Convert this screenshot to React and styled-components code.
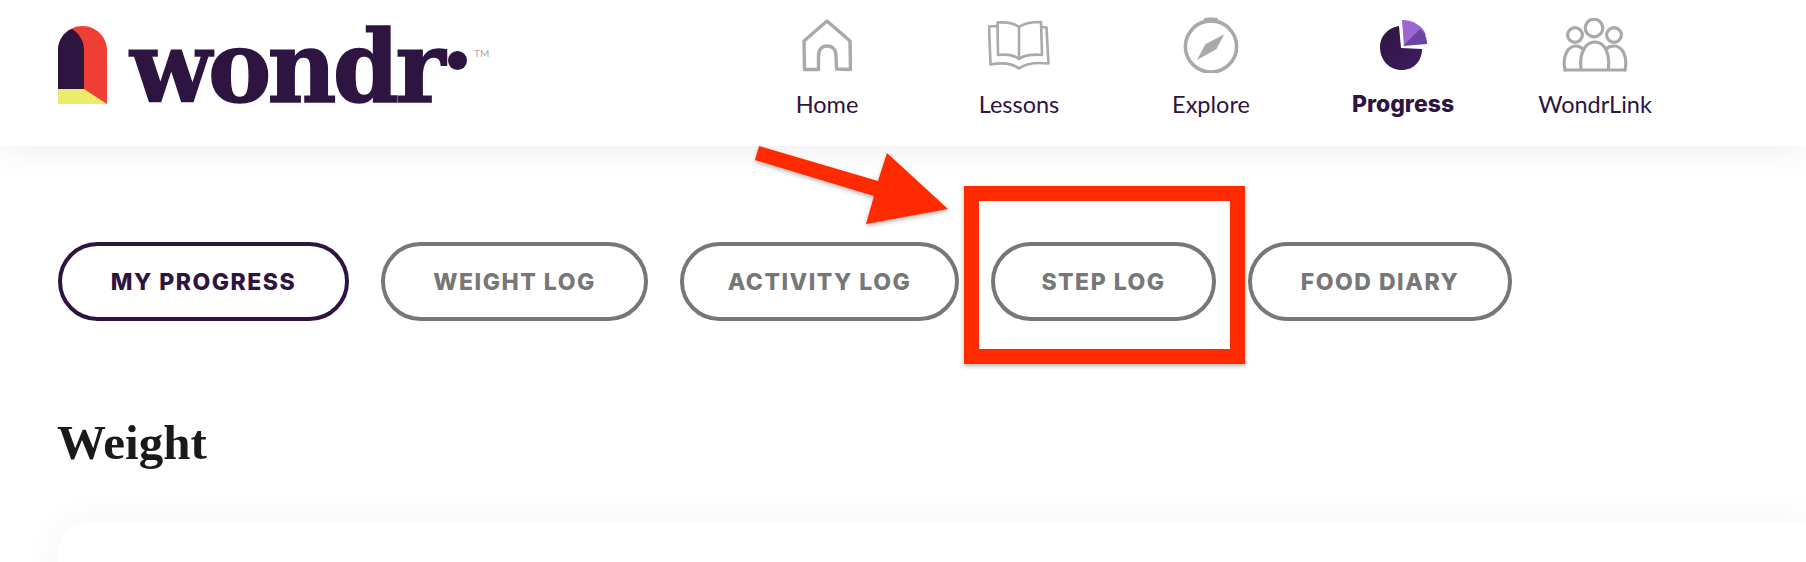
import React from 'react'
import styled, {createGlobalStyle} from 'styled-components'

const GlobalStyle = createGlobalStyle`
    html, body {
        margin: 0;
        padding: 0;
        background: #fff;
    }
`

const tabs = [
    {label: 'MY PROGRESS', width: 291, active: true},
    {label: 'WEIGHT LOG', width: 267},
    {label: 'ACTIVITY LOG', width: 279},
    {label: 'STEP LOG', width: 225},
    {label: 'FOOD DIARY', width: 264},
]

function HomeIcon() {
    return (
        <svg width="50" height="53" viewBox="0 0 50 53" fill="none" stroke="#a9a9a9" strokeWidth="3.4" strokeLinejoin="round" strokeLinecap="round">
            <path d="M25 2 L48 22 L48.5 50.5 L34.5 50 L34 37 C34 30 30 27 25 27 C20 27 16.5 30 16.5 37 L16.5 50.5 L2.5 50.5 L2 22 Z" />
        </svg>
    )
}

function BookIcon() {
    return (
        <svg width="62" height="50" viewBox="0 0 62 50" fill="none" stroke="#a9a9a9" strokeWidth="2.6" strokeLinejoin="round" strokeLinecap="round">
            <path d="M9.5 6 L1 6.5 L2.5 44.5 C13 42.5 24 43 31 48.5 C38 43 50 42.5 60.5 43.5 L58.5 7.5 L53.5 7" />
            <path d="M31 7 C26 3 17 2 9.5 2.5 L10 35 C18 34 26 35 31 39 C36 35 46 34 54 35 L53 2 C45 2 36 3 31 7 Z" />
            <path d="M31 7 L31 39" />
        </svg>
    )
}

function CompassIcon() {
    return (
        <svg width="56" height="56" viewBox="0 0 56 56" fill="none">
            <circle cx="28" cy="29.5" r="25.6" stroke="#a9a9a9" strokeWidth="3.6" />
            <path d="M20 5.5 L21 1.5 C24 .2 32 .2 35 1.5 L36 5.5 Z" fill="#a9a9a9" />
            <polygon points="41.3,17.3 22.3,27.3 14,43 33.3,32.3" fill="#a9a9a9" />
        </svg>
    )
}

function PieIcon() {
    return (
        <svg width="47" height="50" viewBox="0 0 47 50">
            <defs>
                <linearGradient id="pieDark" x1="0" y1="0" x2="1" y2="1">
                    <stop offset="0" stopColor="#2e1440" />
                    <stop offset="1" stopColor="#3f1d60" />
                </linearGradient>
            </defs>
            <path d="M19 6 C8 8 0 16 0 27 C0 40 9 50 22 50 C34 50 42 41 42 29 L21 28 Z" fill="url(#pieDark)" />
            <path d="M22 0 C33 0 43 6 46 15 L24 26 Z" fill="#9b66cf" />
            <path d="M23 26 L40 9 C45 13 47 18 47 24 Z" fill="#6a45a3" />
        </svg>
    )
}

function PeopleIcon() {
    return (
        <svg width="66" height="54" viewBox="0 0 66 54" fill="none" stroke="#a9a9a9" strokeWidth="3.2" strokeLinecap="round" strokeLinejoin="round">
            <circle cx="32" cy="10" r="8.8" />
            <circle cx="13" cy="17" r="7.4" />
            <circle cx="52" cy="17" r="7.4" />
            <path d="M19 51 C17 34 24 24 33 24 C42 24 48 34 46.5 51" />
            <path d="M3 52 C0 38 6 28 14 28 C17 28 19 29 21 31" />
            <path d="M44 31 C46 29 49 28 52 28 C60 28 66 38 63 52" />
            <path d="M3 52 H63" />
        </svg>
    )
}

const navItems = [
    {label: 'Home', Icon: HomeIcon},
    {label: 'Lessons', Icon: BookIcon},
    {label: 'Explore', Icon: CompassIcon},
    {label: 'Progress', Icon: PieIcon, active: true},
    {label: 'WondrLink', Icon: PeopleIcon},
]

function App() {
    return (
        <Page>
            <GlobalStyle />
            <Header>
                <Logo>
                    <svg width="49" height="78" viewBox="0 0 49 78">
                        <path d="M0 78V24.5C0 11 11 0 24.5 0S49 11 49 24.5V78Z" fill="#ef3e33" />
                        <path d="M0 63V24C0 14 6 6 14 3C21 7 26 15 26 24V63Z" fill="#2e1440" />
                        <path d="M0 63H26L49 78H0Z" fill="#eceb6b" />
                    </svg>
                    <Wordmark>wondr</Wordmark>
                    <LogoDot />
                    <Trademark>TM</Trademark>
                </Logo>
                <Nav>
                    {navItems.map(({label, Icon, active}) => (
                        <NavItem key={label}>
                            <IconBox><Icon /></IconBox>
                            <NavLabel $active={active}>{label}</NavLabel>
                        </NavItem>
                    ))}
                </Nav>
            </Header>
            <Tabs>
                {tabs.map(tab => (
                    <Tab key={tab.label} $width={tab.width} $active={tab.active}>{tab.label}</Tab>
                ))}
            </Tabs>
            <Heading>Weight</Heading>
            <Card />
            <Highlight />
            <Arrow width="200" height="84" viewBox="750 144 200 84">
                <polygon points="759,146 878,181 887,153 948,209 866,224 874,196 755,160" fill="#ff2a00" />
            </Arrow>
        </Page>
    )
}

export default App

const Page = styled.div`
    position: relative;
    width: 1806px;
    height: 562px;
    overflow: hidden;
    background: #fff;
`
const Header = styled.header`
    position: relative;
    height: 146px;
    background: #fff;
    display: flex;
    padding-left: 58px;
    box-sizing: border-box;
    box-shadow: 0 4px 32px rgba(0, 0, 0, 0.07);
`
const Logo = styled.div`
    position: relative;
    width: 673px;
    height: 78px;
    margin-top: 26px;
    display: flex;
`
const Wordmark = styled.span`
    font-family: "DejaVu Serif", serif;
    font-weight: 700;
    font-size: 100px;
    line-height: 82px;
    letter-spacing: -4px;
    color: #2e1440;
    -webkit-text-stroke: 1.5px #2e1440;
    margin-left: 23px;
    height: 78px;
    transform: scaleX(0.95);
    transform-origin: left center;
`
const LogoDot = styled.span`
    position: absolute;
    left: 390px;
    top: 25px;
    width: 19px;
    height: 19px;
    border-radius: 50%;
    background: #2e1440;
`
const Trademark = styled.span`
    position: absolute;
    left: 416px;
    top: 21px;
    font-family: "Lato", sans-serif;
    font-size: 10px;
    line-height: 12px;
    color: #a9a9a9;
`
const Nav = styled.nav`
    display: flex;
    padding-top: 17px;
`
const NavItem = styled.div`
    width: 192px;
    display: flex;
    flex-direction: column;
    align-items: center;
`
const IconBox = styled.div`
    height: 56px;
    display: flex;
    align-items: center;
    justify-content: center;
`
const NavLabel = styled.span`
    margin-top: 16px;
    font-family: ${props => props.$active ? '"Inter"' : '"Lato"'}, sans-serif;
    font-size: ${props => props.$active ? 23 : 23.5}px;
    line-height: 30px;
    font-weight: ${props => props.$active ? 800 : 400};
    color: #2e1440;
`
const Tabs = styled.div`
    display: flex;
    gap: 32px;
    padding: 96px 0 0 58px;
`
const Tab = styled.div`
    width: ${props => props.$width}px;
    height: 79px;
    box-sizing: border-box;
    display: flex;
    align-items: center;
    justify-content: center;
    background: #fff;
    border: 4px solid ${props => props.$active ? '#2e1440' : '#777'};
    border-radius: 40px;
    font-family: "Inter", sans-serif;
    font-weight: 800;
    font-size: 23px;
    letter-spacing: 1.5px;
    color: ${props => props.$active ? '#2e1440' : '#777'};
`
const Heading = styled.h1`
    margin: 94px 0 0 57px;
    font-family: "Liberation Serif", serif;
    font-weight: 700;
    font-size: 49px;
    line-height: 56px;
    color: #1a1a1a;
`
const Card = styled.div`
    margin: 51px 0 0 58px;
    height: 200px;
    background: #fff;
    border-radius: 32px 0 0 0;
    box-shadow: 0 0 40px rgba(0, 0, 0, 0.05);
`
const Highlight = styled.div`
    position: absolute;
    left: 964px;
    top: 186px;
    width: 281px;
    height: 178px;
    box-sizing: border-box;
    border: 15px solid #ff2a00;
    box-shadow: 0 2px 4px rgba(0, 0, 0, 0.3);
`
const Arrow = styled.svg`
    position: absolute;
    left: 750px;
    top: 144px;
    filter: drop-shadow(0 2px 2px rgba(0, 0, 0, 0.3));
`
